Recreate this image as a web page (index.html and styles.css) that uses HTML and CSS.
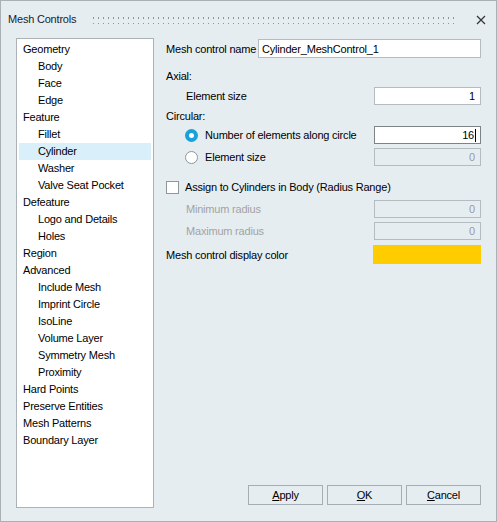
FILE: index.html
```html
<!DOCTYPE html>
<html lang="en">
<head>
    <meta charset="UTF-8">
    <title>Mesh Controls</title>
    <link rel="stylesheet" href="styles.css">
</head>
<body>
    <div class="window">
        <div class="titlebar">
            <span class="title">Mesh Controls</span>
            <span class="grip"></span>
            <svg class="close" width="10" height="10" viewBox="0 0 10 10">
                <path d="M1 1 L9 9 M9 1 L1 9" stroke="#333" stroke-width="1.2"/>
            </svg>
        </div>
        <div class="content">
            <ul class="tree">
                <li>Geometry</li>
                <li class="child">Body</li>
                <li class="child">Face</li>
                <li class="child">Edge</li>
                <li>Feature</li>
                <li class="child">Fillet</li>
                <li class="child selected">Cylinder</li>
                <li class="child">Washer</li>
                <li class="child">Valve Seat Pocket</li>
                <li>Defeature</li>
                <li class="child">Logo and Details</li>
                <li class="child">Holes</li>
                <li>Region</li>
                <li>Advanced</li>
                <li class="child">Include Mesh</li>
                <li class="child">Imprint Circle</li>
                <li class="child">IsoLine</li>
                <li class="child">Volume Layer</li>
                <li class="child">Symmetry Mesh</li>
                <li class="child">Proximity</li>
                <li>Hard Points</li>
                <li>Preserve Entities</li>
                <li>Mesh Patterns</li>
                <li>Boundary Layer</li>
            </ul>
            <div class="panel">
                <div class="row name-row">
                    <span class="label">Mesh control name</span>
                    <input class="field name-field" type="text" value="Cylinder_MeshControl_1">
                </div>
                <div class="heading axial">Axial:</div>
                <div class="row r-axial">
                    <span class="label indent">Element size</span>
                    <input class="field num" type="text" value="1">
                </div>
                <div class="heading circular">Circular:</div>
                <div class="row r-radio1">
                    <span class="label indent radio-label"><span class="radio checked"></span>Number of elements along circle</span>
                    <span class="field num focus">16<span class="caret"></span></span>
                </div>
                <div class="row r-radio2">
                    <span class="label indent radio-label"><span class="radio"></span>Element size</span>
                    <input class="field num" type="text" value="0" disabled>
                </div>
                <div class="check-row">
                    <span class="checkbox"></span>Assign to Cylinders in Body (Radius Range)
                </div>
                <div class="row r-min">
                    <span class="label indent disabled">Minimum radius</span>
                    <input class="field num" type="text" value="0" disabled>
                </div>
                <div class="row r-max">
                    <span class="label indent disabled">Maximum radius</span>
                    <input class="field num" type="text" value="0" disabled>
                </div>
                <div class="row r-color">
                    <span class="label">Mesh control display color</span>
                    <span class="swatch"></span>
                </div>
                <div class="buttons">
                    <button class="btn"><u>A</u>pply</button>
                    <button class="btn"><u>O</u>K</button>
                    <button class="btn"><u>C</u>ancel</button>
                </div>
            </div>
        </div>
    </div>
</body>
</html>
```

FILE: styles.css
```css
body{
    margin: 0;
    font-family: "Liberation Sans", Arial, sans-serif;
    font-size: 11px;
    letter-spacing: -0.2px;
    color: #000;
}
.window{
    width: 495px;
    height: 520px;
    border: 1px solid #a9b0b6;
    background-color: #e6edf1;
    display: flex;
    flex-direction: column;
}
.titlebar{
    height: 37px;
    display: flex;
    align-items: center;
    padding: 0 10px 0 7px;
}
.title{
    color: #1b1b2a;
    margin-top: -1px;
}
.grip{
    flex: 1;
    height: 8px;
    margin: 0 18px 0 15px;
    background-image: radial-gradient(circle, #8d959c 0.8px, transparent 1px);
    background-size: 5px 6px;
    background-position: 0 -1px;
}
.close{
    display: block;
}
.content{
    flex: 1;
    display: flex;
    padding: 0 15px 13px 15px;
}
.tree{
    flex: none;
    list-style: none;
    margin: 0;
    padding: 2px 2px;
    width: 132px;
    background-color: #fff;
    border: 1px solid #abb2b8;
}
.tree li{
    height: 17px;
    line-height: 17px;
    padding-left: 4px;
    white-space: nowrap;
}
.tree li.child{
    padding-left: 19px;
}
.tree li.selected{
    background-color: #d9eff9;
}
.panel{
    flex: 1;
    margin-left: 12px;
    display: flex;
    flex-direction: column;
}
.row{
    display: flex;
    align-items: center;
    justify-content: space-between;
    height: 18px;
}
.name-row{
    height: 19px;
    margin-top: 1px;
}
.label{
    white-space: nowrap;
}
.indent{
    padding-left: 20px;
}
.disabled{
    color: #a3a3a3;
}
.field{
    box-sizing: border-box;
    height: 18px;
    width: 107px;
    border: 1px solid #b4bbc1;
    background-color: #fff;
    font-family: inherit;
    font-size: 11px;
    letter-spacing: -0.2px;
    padding: 0 5px;
    color: #000;
    outline: none;
}
.name-field{
    width: 223px;
    height: 19px;
    padding: 0 3px;
}
.num{
    text-align: right;
}
span.field{
    display: flex;
    align-items: center;
    justify-content: flex-end;
    padding-right: 4px;
}
.caret{
    width: 1px;
    height: 13px;
    background-color: #000;
    margin-left: 1px;
}
.field.focus{
    border-color: #7d8489;
}
.field:disabled{
    background-color: #e6edf1;
    color: #9a9a9a;
}
.heading{
    height: 16px;
    line-height: 16px;
}
.axial{
    margin-top: 10px;
}
.r-axial{
    margin-top: 3px;
}
.circular{
    margin-top: 3px;
}
.r-radio1{
    margin-top: 2px;
}
.r-radio2{
    margin-top: 4px;
}
.radio-label{
    display: flex;
    align-items: center;
    padding-left: 19px;
}
.radio{
    box-sizing: border-box;
    width: 13px;
    height: 13px;
    border-radius: 50%;
    border: 1px solid #8f969c;
    background-color: #fff;
    margin-right: 7px;
}
.radio.checked{
    border: 4px solid #1aa0db;
}
.check-row{
    display: flex;
    align-items: center;
    height: 16px;
    margin-top: 13px;
}
.checkbox{
    box-sizing: border-box;
    width: 13px;
    height: 13px;
    border: 1px solid #8f969c;
    background-color: #fff;
    margin-right: 6px;
}
.r-min{
    margin-top: 5px;
}
.r-max{
    margin-top: 4px;
}
.r-color{
    margin-top: 5px;
    height: 19px;
}
.swatch{
    width: 108px;
    height: 19px;
    background-color: #ffcc00;
}
.buttons{
    margin-top: auto;
    margin-bottom: 3px;
    display: flex;
    justify-content: flex-end;
    gap: 4px;
}
.btn{
    width: 75px;
    height: 20px;
    border: 1px solid #a6adb3;
    background-color: #e6edf1;
    font-family: inherit;
    font-size: 11px;
    letter-spacing: -0.2px;
    color: #000;
    padding: 0;
}
```
